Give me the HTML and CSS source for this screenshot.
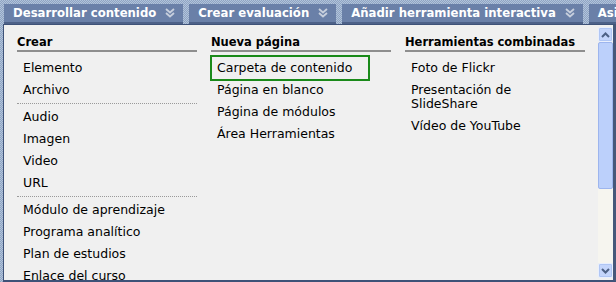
FILE: index.html
```html
<!DOCTYPE html>
<html lang="es">
	<head>
		<meta charset="UTF-8">
		<title>Menú del curso</title>
		<link rel="stylesheet" href="styles.css">
	</head>
	<body>
		<nav class="tabs">
			<a class="tab">Desarrollar contenido <svg class="chev" width="10" height="10" viewBox="0 0 10 10"><polyline points="1,1 5,4.5 9,1"/><polyline points="1,5 5,8.5 9,5"/></svg></a>
			<a class="tab">Crear evaluación <svg class="chev" width="10" height="10" viewBox="0 0 10 10"><polyline points="1,1 5,4.5 9,1"/><polyline points="1,5 5,8.5 9,5"/></svg></a>
			<a class="tab">Añadir herramienta interactiva <svg class="chev" width="10" height="10" viewBox="0 0 10 10"><polyline points="1,1 5,4.5 9,1"/><polyline points="1,5 5,8.5 9,5"/></svg></a>
			<a class="tab">Asignar a curso</a>
		</nav>
		<div class="panel">
			<div class="columns">
				<section class="col">
					<h2>Crear</h2>
					<ul>
						<li>Elemento</li>
						<li>Archivo</li>
						<li class="sep"></li>
						<li>Audio</li>
						<li>Imagen</li>
						<li>Video</li>
						<li>URL</li>
						<li class="sep"></li>
						<li>Módulo de aprendizaje</li>
						<li>Programa analítico</li>
						<li>Plan de estudios</li>
						<li>Enlace del curso</li>
					</ul>
				</section>
				<section class="col">
					<h2>Nueva página</h2>
					<ul>
						<li class="active">Carpeta de contenido</li>
						<li>Página en blanco</li>
						<li>Página de módulos</li>
						<li>Área Herramientas</li>
					</ul>
				</section>
				<section class="col">
					<h2>Herramientas combinadas</h2>
					<ul>
						<li>Foto de Flickr</li>
						<li>Presentación de<br>SlideShare</li>
						<li>Vídeo de YouTube</li>
					</ul>
				</section>
			</div>
			<div class="scrollbar">
				<div class="sb-btn"><svg width="9" height="6" viewBox="0 0 9 6"><polyline points="1,5 4.5,1.5 8,5"/></svg></div>
				<div class="sb-thumb"></div>
				<div class="sb-track"></div>
				<div class="sb-btn"><svg width="9" height="6" viewBox="0 0 9 6"><polyline points="1,1 4.5,4.5 8,1"/></svg></div>
			</div>
		</div>
	</body>
</html>
```
FILE: styles.css
```css
body{
	margin: 0;
	height: 282px;
	overflow: hidden;
	font-family: "DejaVu Sans", Verdana, sans-serif;
	font-size: 12.5px;
	background: repeating-conic-gradient(#8ea4c3 0 25%, #b2c3da 0 50%) 0 0/2px 2px;
}
.tabs{
	display: flex;
	gap: 6px;
	padding: 4px 0 0 4px;
	white-space: nowrap;
	overflow: hidden;
}
.tab{
	display: flex;
	align-items: center;
	gap: 9px;
	flex-shrink: 0;
	height: 18px;
	padding: 0 8px 0 9px;
	background-color: #6a80a8;
	border-bottom: 2px solid #4d6188;
	color: #fff;
	font-size: 11.7px;
	font-weight: bold;
}
.chev{
	fill: none;
	stroke: #c7cfdd;
	stroke-width: 1.8;
}
.panel{
	display: flex;
	width: 609px;
	height: 255px;
	margin-left: 3px;
	background-color: #f0f0f0;
	border-left: 1px solid #3e5278;
	border-top: 1px solid #3e5278;
	border-bottom: 2px solid #3e5278;
	border-right: 3px solid #46587a;
}
.columns{
	flex: 1;
	display: flex;
	gap: 14px;
	padding: 10px 0 0 13px;
	overflow: hidden;
}
.col{
	width: 180px;
	flex-shrink: 0;
}
h2{
	margin: 0;
	font-size: 11.5px;
	line-height: 14px;
	padding-bottom: 1px;
	border-bottom: 2px solid #8e8e8e;
	white-space: nowrap;
}
ul{
	list-style: none;
	margin: 5px 0 0;
	padding: 0;
}
li{
	line-height: 14px;
	padding: 4px 5px;
	margin: 0 23px 0 1px;
	color: #000;
	white-space: nowrap;
}
li.sep{
	padding: 0;
	margin: 2px 0;
	border-top: 1px dotted #9a9a9a;
}
li.active{
	outline: 2px solid #1a8a1a;
}
.scrollbar{
	width: 15px;
	margin: 2px 0;
	display: flex;
	flex-direction: column;
}
.sb-btn{
	height: 13px;
	display: flex;
	align-items: center;
	justify-content: center;
	background-color: #c4d5fb;
	border: 1px solid #e9effd;
	border-radius: 2px;
	box-shadow: inset 0 0 0 1px #b0c6f4;
}
.sb-btn svg{
	fill: none;
	stroke: #4d6185;
	stroke-width: 2;
}
.sb-thumb{
	height: 145px;
	background-color: #bcd0fb;
	border: 1px solid #9db5ee;
	border-radius: 2px;
}
.sb-track{
	flex: 1;
	background-color: #f6f5ef;
}
```
